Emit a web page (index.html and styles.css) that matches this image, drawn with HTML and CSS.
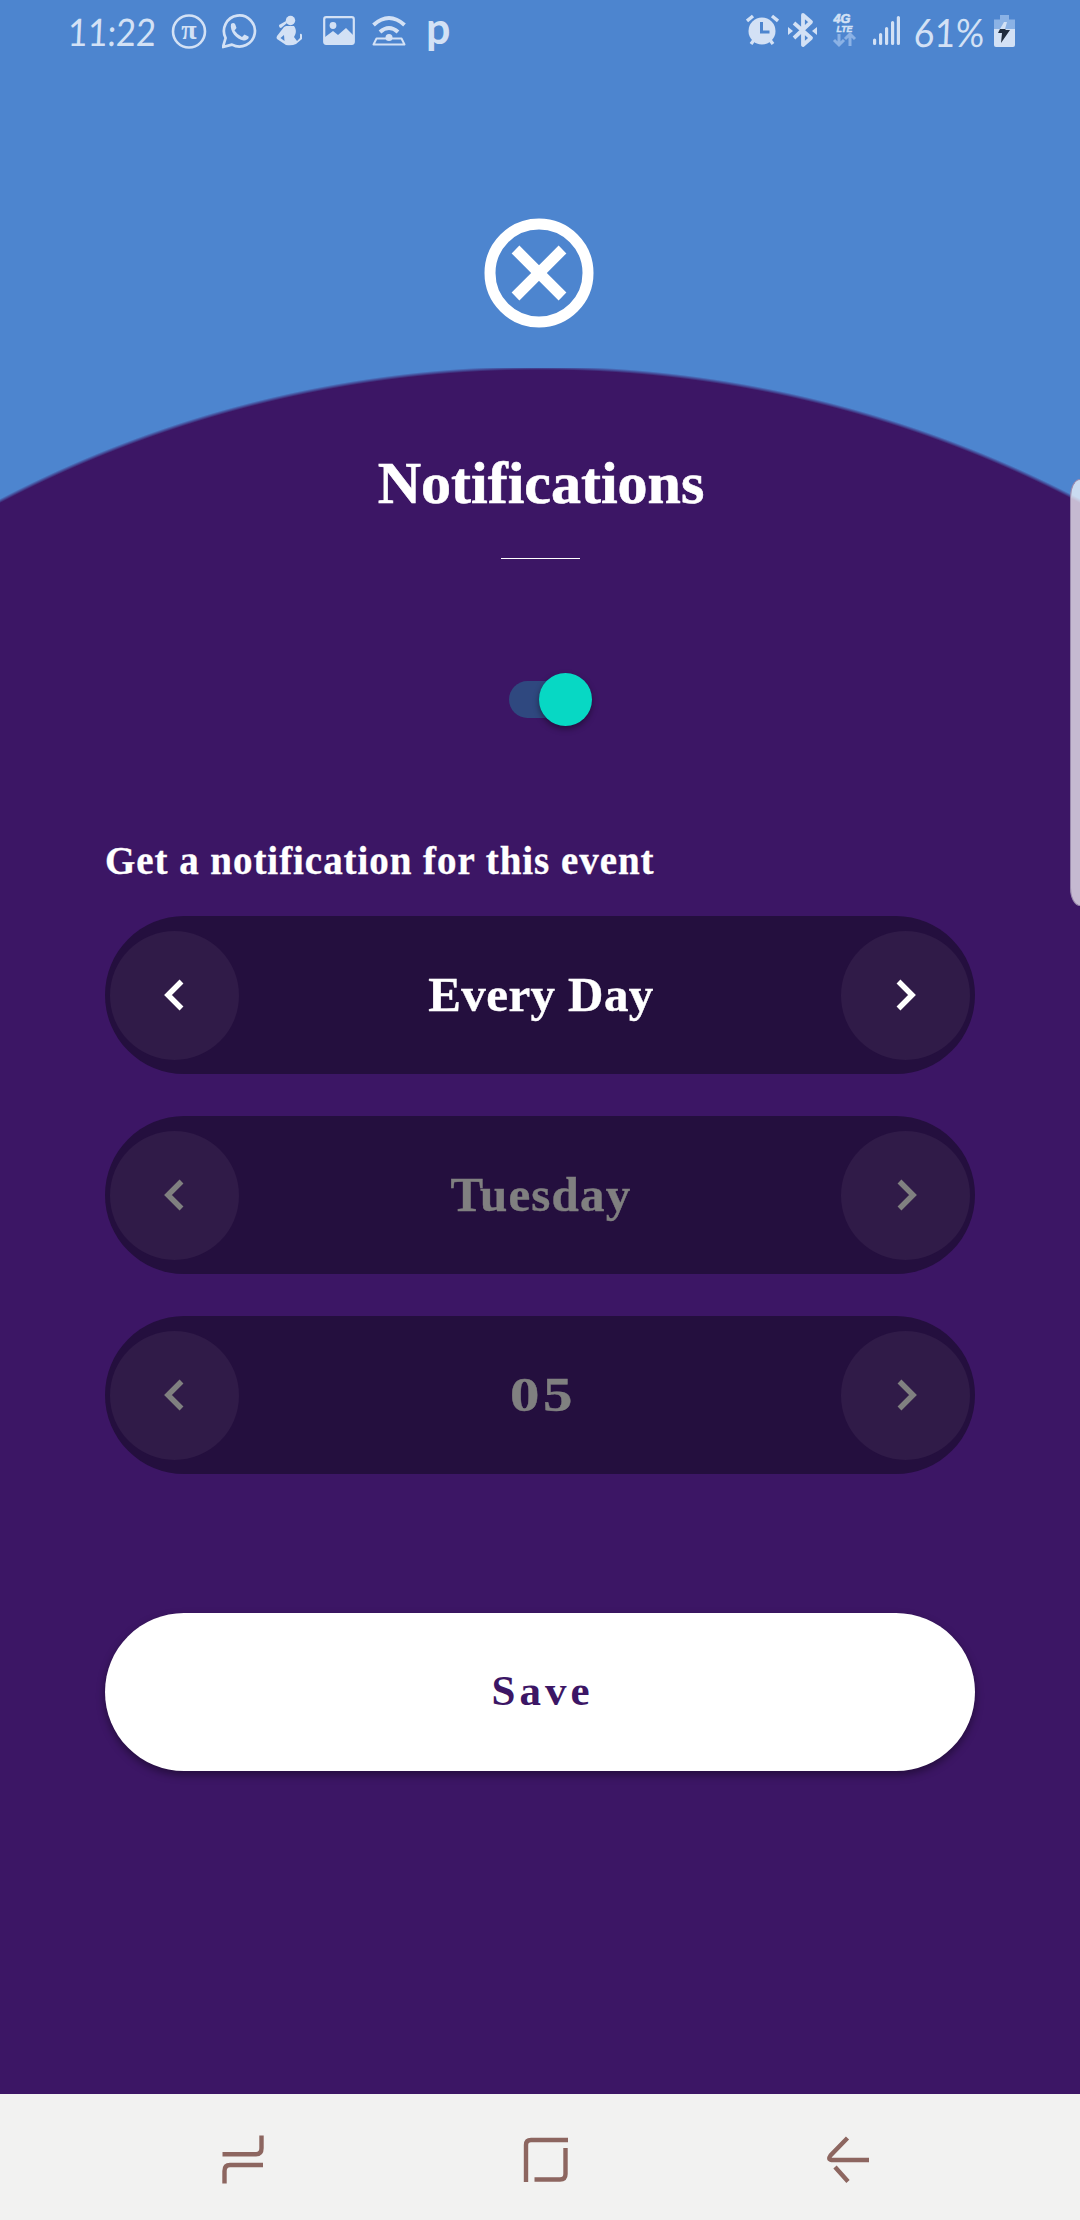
FILE: index.html
```html
<!DOCTYPE html>
<html lang="en">
<head>
<meta charset="utf-8">
<title>Notifications</title>
<link rel="stylesheet" href="styles.css">
</head>
<body>
<div class="screen">
  <header class="status">
    <div class="status-left">
      <span class="clock">11:22</span>
      <svg class="pi" width="36" height="64" viewBox="171 0 36 64"><circle cx="189" cy="31.5" r="16" fill="none" stroke="currentColor" stroke-width="2.6"/><text x="189" y="38.500" text-anchor="middle" class="pi-glyph">π</text></svg>
      <svg class="chat" width="35" height="64" viewBox="222 0 35 64"><path d="M223 47l2.6-9A15.5 15.5 0 1 1 232 44.600Z" fill="none" stroke="currentColor" stroke-width="2.7" stroke-linejoin="round"/><path d="M231 24c2-2 4-1 4.500 1l1 3-2 2.500q3 4.500 7.500 6.500l2.500-2.500 4 2c1 2-2 4-5 4-7-1-14-9-12.500-16.500Z" fill="currentColor"/></svg>
      <svg class="figure" width="28" height="64" viewBox="276 0 28 64"><g fill="currentColor"><circle cx="290.500" cy="20.500" r="4.700"/><path d="M286 26h8c3 4 2 8 0 11l3 4 3-3v-4q1.500-1 2 1v4l-6 5q-4 2-10 1l-9-6q-1-1 0-3l7-9ZM279 25l7-4 1 2-6 5q-2 0-2-3Z"/></g><path d="m284 35-3.500 3 4 3Z" class="cut"/></svg>
      <svg class="photo" width="32" height="64" viewBox="323 0 32 64"><rect x="324.200" y="17.200" width="29.600" height="26.600" rx="2" fill="none" stroke="currentColor" stroke-width="2.200"/><circle cx="333" cy="25.500" r="3.400" fill="currentColor"/><path d="m325 37 8-6 5 4 8-7 8 8v8h-29Z" fill="currentColor"/></svg>
      <svg class="hotspot" width="34" height="64" viewBox="372 0 34 64"><g fill="none" stroke="currentColor"><path d="M373.500 25q15.500-14 31 0" stroke-width="4"/><path d="M380 32q9-8 18 0" stroke-width="4"/><path d="M376.500 38.500h25l3 6h-31Z" stroke-width="2" stroke-linejoin="round"/></g><circle cx="389" cy="37.500" r="3.500" fill="currentColor"/></svg>
      <span class="p-app">p</span>
    </div>
    <div class="status-right">
      <svg width="33" height="64" viewBox="746 0 33 64"><circle cx="762" cy="31" r="13.500" fill="currentColor"/><path d="m747 21 6-5m25 5-6-5M751 44l3-4m19 4-3-4" stroke="currentColor" stroke-width="3.400"/><path d="M761.500 22v10h8" fill="none" class="cut-line"/></svg>
      <svg class="bt" width="30" height="64" viewBox="788 0 30 64"><path d="m794 23 17 15-8 7V15l8 7-17 16" fill="none" stroke="currentColor" stroke-width="3.800" stroke-linejoin="round"/><path d="m788 27 5 4-5 4Zm29 0v8l-5-4Z" fill="currentColor"/></svg>
      <svg class="lte" width="26" height="64" viewBox="832 0 26 64"><text x="833.500" y="23" class="lte-big" textLength="17" lengthAdjust="spacingAndGlyphs">4G</text><text x="836.500" y="31.800" class="lte-small" textLength="16" lengthAdjust="spacingAndGlyphs">LTE</text><path d="M839 34v11m-5-5 5 5 5-5m6 6V34m-5 5 5-5 5 5" class="arrows"/></svg>
      <svg class="signal" width="28" height="64" viewBox="873 0 28 64"><path d="M874.600 40v3.500m6-9v9m6-15v15m6-21v21m5.800-26v26" stroke="currentColor" stroke-width="3.200" stroke-linecap="round"/></svg>
      <span class="percent"><span>61%</span></span>
      <svg class="battery" width="22" height="64" viewBox="994 0 22 64"><path d="M994 29V19.500h6V15h9v4.500h6V29Z" fill="#8bb2e5"/><path d="M994 29h21v16q0 2-2 2h-17q-2 0-2-2Z" fill="currentColor"/><path d="m1004 22h3l-2 7h-5Z" fill="#d3e1f5"/><path d="m1000 29-2 4h4l-1 10 9-13h-5l1-1Z" fill="#202c3e"/></svg>
    </div>
  </header>

  <main class="content">
    <svg class="close" width="110" height="110" viewBox="0 0 110 110" role="img" aria-label="Close"><g fill="none" stroke="#fff"><circle cx="55" cy="55" r="49" stroke-width="11"/><path d="m31.500 31.500 47 47m0-47-47 47" stroke-width="11"/></g></svg>
    <h1 class="title">Notifications</h1>
    <div class="divider"></div>
    <div class="toggle"><div class="thumb"></div></div>
    <p class="label">Get a notification for this event</p>
    <div class="pickers">
      <div class="picker">
        <div class="step"><svg width="32" height="36" viewBox="0 0 32 36"><path d="M22.500 4.500 9 18l13.500 13.500"/></svg></div>
        <span class="value every">Every Day</span>
        <div class="step"><svg width="32" height="36" viewBox="0 0 32 36"><path d="M9.500 4.500 23 18 9.500 31.500"/></svg></div>
      </div>
      <div class="picker disabled">
        <div class="step"><svg width="32" height="36" viewBox="0 0 32 36"><path d="M22.500 4.500 9 18l13.500 13.500"/></svg></div>
        <span class="value day">Tuesday</span>
        <div class="step"><svg width="32" height="36" viewBox="0 0 32 36"><path d="M9.500 4.500 23 18 9.500 31.500"/></svg></div>
      </div>
      <div class="picker disabled">
        <div class="step"><svg width="32" height="36" viewBox="0 0 32 36"><path d="M22.500 4.500 9 18l13.500 13.500"/></svg></div>
        <span class="value number">05</span>
        <div class="step"><svg width="32" height="36" viewBox="0 0 32 36"><path d="M9.500 4.500 23 18 9.500 31.500"/></svg></div>
      </div>
    </div>
    <div class="save"><span>Save</span></div>
  </main>

  <nav class="navbar">
    <svg width="50" height="60" viewBox="218 2130 50 60"><path d="M222.500 2154.200H256q5.500 0 5.500-6V2135.500M263 2165h-33q-5.500 0-5.500 6v12.500"/></svg>
    <svg width="50" height="60" viewBox="520 2130 50 60"><path d="M525 2182v-37q0-5 5-5h37M564.500 2148v26q0 5.500-5.500 5.500h-25.500"/></svg>
    <svg width="50" height="60" viewBox="824 2130 50 60"><path d="m847.500 2138-17 17.500q-3 4 1 4.500h37.500M835 2167l13 14.500"/></svg>
  </nav>
  <div class="edge-handle"></div>
</div>
</body>
</html>
```
FILE: styles.css
```css
* { box-sizing: border-box; }
body { margin: 0; }

.screen {
  position: relative;
  width: 1080px;
  height: 2220px;
  overflow: hidden;
  display: flex;
  flex-direction: column;
  font-family: "Liberation Serif", "Times New Roman", serif;
  font-weight: 700;
  color: #fff;
  background:
    linear-gradient(#4d85cf, #4d85cf) 0 0 / 100% 368px no-repeat,
    radial-gradient(circle at 540px 1531px, #3c1665 1161px, #4d85cf 1165px);
}

.status {
  height: 64px;
  padding: 0 64px 0 68px;
  display: flex;
  justify-content: space-between;
  font-family: Lato, sans-serif;
  font-weight: 400;
  color: #d3e1f5;
}
.status-left, .status-right { display: flex; align-items: center; }
.status svg { display: block; flex: none; }
.clock {
  width: 103px;
  font-size: 38px;
  line-height: 62px;
  height: 64px;
  white-space: nowrap;
  transform: scaleX(.9) skewX(-3deg);
  transform-origin: 0 50%;
}
.pi { margin-right: 15px; }
.pi-glyph { font: 700 28px "Liberation Serif", serif; fill: currentColor; }
.chat { margin-right: 19px; }
.figure { margin-right: 19px; }
.photo { margin-right: 17px; }
.hotspot { margin-right: 20px; }
.p-app { height: 58px; font: 700 43px/50px Lato, sans-serif; }
.cut { fill: #4d85cf; }
.cut-line { stroke: #4d85cf; stroke-width: 3; }
.bt { margin-left: 9px; }
.lte { margin-left: 14px; }
.lte-big { font: italic 700 13px "Liberation Sans", sans-serif; fill: currentColor; stroke: currentColor; stroke-width: .6; }
.lte-small { font: italic 700 9.500px "Liberation Sans", sans-serif; fill: currentColor; stroke: currentColor; stroke-width: .5; }
.arrows { fill: none; stroke: #8bb2e5; stroke-width: 3; }
.signal { margin-left: 15px; }
.percent {
  width: 80px;
  height: 64px;
  margin-left: 13px;
  font-size: 39px;
  line-height: 64px;
  white-space: nowrap;
  transform: scaleX(.92) skewX(-3deg);
  transform-origin: 0 50%;
}

.content { flex: 1; display: flex; flex-direction: column; align-items: center; }
.close { display: block; margin: 154px 3px 0 0; }
.title { margin: 120px 0 0 2px; font-size: 60px; line-height: 70px; -webkit-text-stroke: .6px currentColor; }
.divider { width: 79px; height: 1px; margin-top: 40px; background: #fff; }
.toggle {
  width: 75px;
  height: 37px;
  margin: 122px 0 0 13px;
  display: flex;
  align-items: center;
  justify-content: flex-end;
  border-radius: 19px;
  background: #2f487f;
}
.thumb {
  flex: none;
  width: 53px;
  height: 53px;
  margin-right: -8px;
  border-radius: 50%;
  background: #07d8c4;
  box-shadow: 0 3px 6px rgba(0, 0, 0, .4);
}
.label {
  align-self: flex-start;
  margin: 120px 0 0 105px;
  font-size: 39px;
  line-height: 46px;
  letter-spacing: .950px;
  -webkit-text-stroke: .3px currentColor;
}
.pickers { width: 870px; margin-top: 32px; display: flex; flex-direction: column; gap: 42px; }
.picker {
  height: 158px;
  padding: 0 5px;
  display: flex;
  align-items: center;
  justify-content: space-between;
  border-radius: 79px;
  background: #240f3e;
}
.step {
  width: 129px;
  height: 129px;
  display: flex;
  align-items: center;
  justify-content: center;
  border-radius: 50%;
  background: #301b48;
}
.step path { fill: none; stroke: currentColor; stroke-width: 5.500; }
.disabled { color: #808080; }
.value { font-size: 49px; line-height: 60px; -webkit-text-stroke: .4px currentColor; }
.every { letter-spacing: .4px; padding-left: 2px; }
.day { letter-spacing: 1.200px; padding-left: 2px; }
.number { letter-spacing: 3px; padding-left: 4px; transform: scaleX(1.2); }
.save {
  width: 870px;
  height: 158px;
  margin-top: 139px;
  padding: 0 0 3px 5px;
  display: flex;
  align-items: center;
  justify-content: center;
  border-radius: 79px;
  background: #fff;
  color: #3c1665;
  font-size: 43px;
  letter-spacing: 4px;
  box-shadow: 0 4px 8px rgba(0, 0, 0, .4);
}

.navbar {
  height: 126px;
  padding: 6px 206px 0 218px;
  display: flex;
  align-items: center;
  justify-content: space-between;
  background: #f2f2f1;
}
.navbar path { fill: none; stroke: #8d6660; stroke-width: 4.400; }

.edge-handle {
  position: absolute;
  right: 0;
  top: 479px;
  width: 10px;
  height: 427px;
  border: 1px solid #9a89ad;
  border-right: 0;
  border-radius: 10px 0 0 10px / 18px 0 0 18px;
  background: rgba(255, 255, 255, .7);
}
```
